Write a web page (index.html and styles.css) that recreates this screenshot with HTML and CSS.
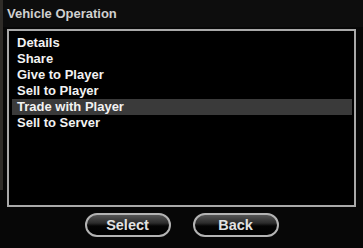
FILE: index.html
```html
<!DOCTYPE html>
<html>
<head>
<meta charset="utf-8">
<link rel="stylesheet" href="styles.css">
</head>
<body>
<div class="window">
  <div class="titlebar">Vehicle Operation</div>
  <div class="list">
    <div class="row">Details</div>
    <div class="row">Share</div>
    <div class="row">Give to Player</div>
    <div class="row">Sell to Player</div>
    <div class="row selected">Trade with Player</div>
    <div class="row">Sell to Server</div>
  </div>
  <div class="buttons">
    <button class="btn">Select</button>
    <button class="btn">Back</button>
  </div>
</div>
</body>
</html>
```

FILE: styles.css
```css
html, body {
  margin: 0;
  padding: 0;
}
body {
  width: 363px;
  height: 248px;
  overflow: hidden;
  background:
    linear-gradient(90deg, #2f2c28 0, #2f2c28 3px, transparent 3px) 0 0 / 100% 190px no-repeat,
    linear-gradient(#2a2a2a, #2a2a2a) 343px 0 / 20px 3px no-repeat,
    #070707;
  font-family: "Liberation Sans", Arial, sans-serif;
}
.window {
  display: flex;
  flex-direction: column;
  height: 248px;
}
.titlebar {
  height: 27px;
  margin-left: 3px;
  padding-left: 4px;
  box-sizing: border-box;
  background: #0d0d0d;
  color: #d0d0d0;
  font-weight: bold;
  font-size: 13px;
  line-height: 28px;
}
.list {
  margin: 2px 7px 0 7px;
  height: 178px;
  box-sizing: border-box;
  border: 2px solid #a9a9a9;
  background: #000;
  padding: 4px 2px 0 3px;
}
.row {
  height: 16px;
  line-height: 16px;
  padding-left: 5px;
  color: #f2f2f2;
  font-weight: bold;
  font-size: 13px;
}
.row.selected {
  background: #3a3a3a;
}
.buttons {
  display: flex;
  justify-content: center;
  gap: 22px;
  margin-top: 6px;
}
.btn {
  width: 86px;
  height: 24px;
  box-sizing: border-box;
  border: 2px solid #b3b3b3;
  border-radius: 12px;
  background: linear-gradient(#555 0%, #2c2c2c 40%, #050505 55%, #000 100%);
  color: #e2e2e2;
  font-family: "Liberation Sans", Arial, sans-serif;
  font-weight: bold;
  font-size: 14.5px;
  line-height: 20px;
  padding: 0;
}
```
